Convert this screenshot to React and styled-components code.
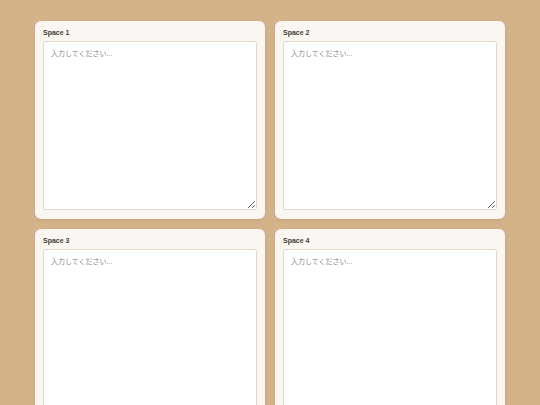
import React from 'react';
import styled, { createGlobalStyle } from 'styled-components';

const GlobalStyle = createGlobalStyle`
  html, body {
    margin: 0;
    padding: 0;
    background: #d4b38b;
    font-family: "Liberation Sans", Arial, "Noto Sans CJK JP", sans-serif;
  }
`;

const Grid = styled.div`
  width: 470px;
  margin: 0 auto;
  padding-top: 21px;
  display: grid;
  grid-template-columns: 1fr 1fr;
  gap: 10px;
`;

const Card = styled.div`
  background: #faf6f2;
  border-radius: 6px;
  box-shadow: 0 1px 3px rgba(90, 60, 30, 0.15);
  padding: 8px 8px 9px;
  display: flex;
  flex-direction: column;
`;

const Label = styled.label`
  font-size: 7px;
  font-weight: bold;
  color: #4a3a2e;
  margin-bottom: 4px;
  line-height: 8px;
`;

const Area = styled.textarea`
  box-sizing: border-box;
  width: 100%;
  height: 169px;
  border: 1px solid #e3d9cf;
  border-radius: 2px;
  background: #fff;
  padding: 7px;
  font-family: "Liberation Sans", Arial, "Noto Sans CJK JP", sans-serif;
  font-size: 7px;
  line-height: 9px;
  color: #333;
  resize: vertical;
  outline: none;

  &::placeholder {
    color: #8c8883;
  }
`;

const spaces = ['Space 1', 'Space 2', 'Space 3', 'Space 4'];

export default function App() {
  return (
    <>
      <GlobalStyle />
      <Grid>
        {spaces.map((name) => (
          <Card key={name}>
            <Label>{name}</Label>
            <Area placeholder="入力してください..." />
          </Card>
        ))}
      </Grid>
    </>
  );
}
